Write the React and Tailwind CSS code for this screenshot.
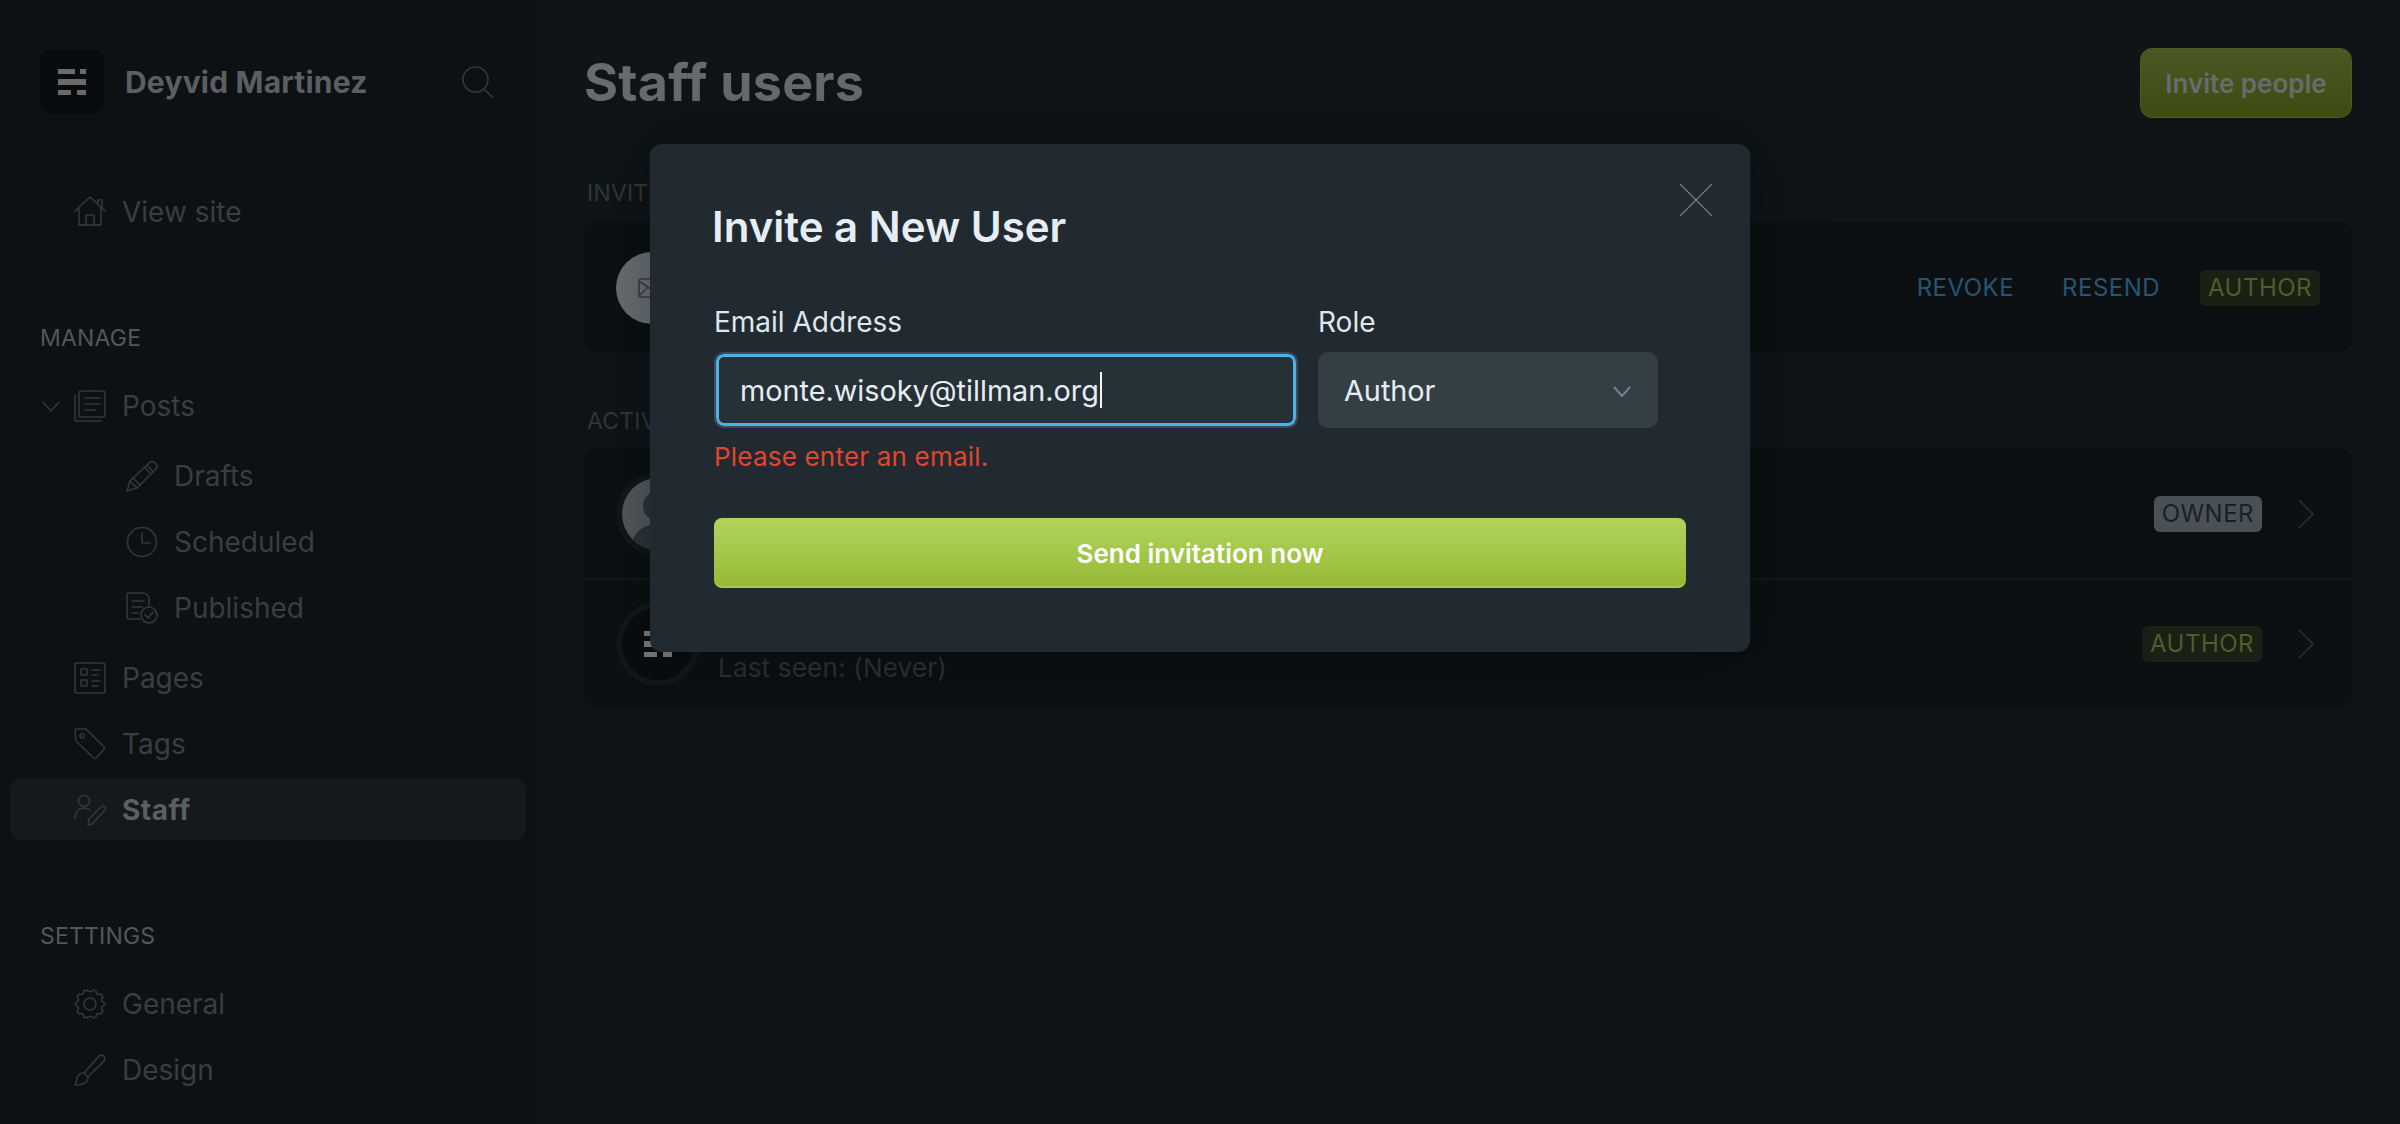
const Icon = ({ children, w = 32, h = 32, className = '' }) => (
  <svg width={w} height={h} viewBox={`0 0 ${w} ${h}`} fill="none" stroke="currentColor" strokeWidth="1.6" strokeLinecap="round" strokeLinejoin="round" className={`shrink-0 text-[#30383e] ${className}`}>
    {children}
  </svg>
)

const HomeIcon = () => (
  <Icon>
    <path d="M1 15 16 1l15 14" />
    <path d="M24 8V4h4v8" />
    <path d="M5 12v17h7V19h8v10h7V12" />
    <path d="M5 29h22" />
  </Icon>
)
const PostsIcon = () => (
  <Icon>
    <rect x="5" y="1" width="26" height="26" rx="2" />
    <path d="M1 5v24a2 2 0 0 0 2 2h24" />
    <path d="M11 8h15M11 14h15M11 20h11" />
  </Icon>
)
const PencilIcon = () => (
  <Icon>
    <path d="M1 31 4 21 23 3a4 4 0 0 1 6 0 4 4 0 0 1 1 6L11 28Z" />
    <path d="M4 21 11 28M21 5l6 7M7 18l7 7M19 8l6 6" />
  </Icon>
)
const ClockIcon = () => (
  <Icon>
    <circle cx="16" cy="16" r="14.5" />
    <path d="M16 7v10h8" />
  </Icon>
)
const PublishedIcon = () => (
  <Icon>
    <path d="M14 27H3a2 2 0 0 1-2-2V3a2 2 0 0 1 2-2h14a6 6 0 0 1 6 6v7" />
    <path d="M6 9h12M6 15h10M6 21h6" />
    <circle cx="23" cy="23" r="8" />
    <path d="m19 23 3 3 5-6" />
  </Icon>
)
const PagesIcon = () => (
  <Icon>
    <rect x="1" y="1" width="30" height="30" rx="2" />
    <rect x="7" y="7" width="6" height="6" />
    <rect x="7" y="18" width="6" height="6" />
    <path d="M18 8h8M18 13h6M18 19h8M18 24h6" />
  </Icon>
)
const TagIcon = () => (
  <Icon>
    <path d="M1 3a2 2 0 0 1 2-2h9l18 18a2 2 0 0 1 0 2.500L22 30a2 2 0 0 1-2.500 0L2 13Z" />
    <circle cx="8" cy="8" r="2" />
  </Icon>
)
const StaffIcon = () => (
  <Icon>
    <circle cx="10" cy="7" r="5.500" />
    <path d="M1 24c0-6 4-10 9-10 3 0 5 1 6 2" />
    <path d="M14 31l1-6L27 13c1-1 3-1 4 0s0 3-1 4L18 30Z" />
  </Icon>
)
const GearIcon = () => (
  <Icon>
    <circle cx="16" cy="16" r="6" />
    <path d="M13 2c1 2 5 2 6 0l3 1c0 3 2 4 5 3l2 3c-2 1-2 4 0 5 1 1 2 1 2 2s-1 1-2 2c-2 1-2 4 0 5l-2 3c-3-1-5 0-5 3l-3 1c-1-2-5-2-6 0l-3-1c0-3-2-4-5-3l-2-3c2-1 2-4 0-5-1-1-2-1-2-2s1-1 2-2c2-1 2-4 0-5l2-3c3 1 5 0 5-3Z" />
  </Icon>
)
const BrushIcon = () => (
  <Icon>
    <path d="M10 19 25 2c1-1 3-1 5 0 1 2 1 3 0 5L14 23Z" />
    <path d="M10 19c-4 0-6 2-7 5 0 3-1 5-2 7 5 0 10-1 12-4 1-2 1-3 1-4" />
  </Icon>
)
const Chevron = ({ className = '', weight = 1.5 }) => (
  <svg width="18" height="11" viewBox="0 0 18 11" fill="none" stroke="currentColor" strokeWidth={weight} className={className}>
    <path d="m1 1 8 9 8-9" />
  </svg>
)
const RowArrow = () => (
  <svg width="16" height="28" viewBox="0 0 16 28" fill="none" stroke="currentColor" strokeWidth="1.2" className="text-[#31363a]">
    <path d="m1 0 14 14L1 28" />
  </svg>
)
const LogoMark = ({ color = '#6a6a6a' }) => (
  <svg width="28" height="26" viewBox="0 0 28 26" fill={color}>
    <rect x="0" y="0" width="17" height="5" />
    <rect x="22" y="0" width="6" height="5" />
    <rect x="0" y="10" width="28" height="6" />
    <rect x="0" y="21" width="13" height="5" />
    <rect x="19" y="21" width="9" height="5" />
  </svg>
)

const NavRow = ({ icon, label, sub, active, chevron }) => (
  <div className={`flex h-[62px] w-[516px] ml-[10px] items-center rounded-xl ${sub ? 'pl-[116px]' : chevron ? 'pl-[32px]' : 'pl-[64px]'} ${active ? '-mt-[1px] mb-[1px] pt-[2px] bg-[#15191c] font-bold text-[#5a5f63]' : 'text-[#383e42]'}`}>
    {chevron && <Chevron className="mr-[14px] text-[#30383e]" />}
    {icon}
    <span className={`ml-[16px] text-[28px] ${active ? 'tracking-[0.5px]' : ''}`}>{label}</span>
  </div>
)

const SectionLabel = ({ children }) => (
  <div className="mt-[83px] mb-[25px] ml-[40px] h-[24px] text-[23px] leading-[24px] tracking-[0.2px] text-[#52575b]">{children}</div>
)

const Badge = ({ children, className }) => (
  <span className={`flex h-[36px] items-center rounded-md px-[8px] text-[24px] tracking-[0.02em] ${className}`}>{children}</span>
)

const UserLabel = ({ children, className = '' }) => (
  <div className={`h-[24px] pl-[3px] text-[23px] leading-[24px] tracking-[0.2px] text-[#31373b] ${className}`}>{children}</div>
)

export default function App() {
  return (
    <div className="relative flex h-[1124px] w-[2400px] overflow-hidden bg-[#0f1417] font-['Inter',sans-serif]">
      <aside className="h-full w-[536px] shrink-0 bg-[#0d1113] pt-[50px]">
        <div className="flex h-[64px] items-center pl-[40px]">
          <div className="flex h-[64px] w-[64px] items-center justify-center rounded-xl bg-[#080b0d]">
            <LogoMark />
          </div>
          <span className="ml-[21px] text-[30px] font-bold tracking-[0.2px] text-[#5a5f63]">Deyvid Martinez</span>
          <svg width="32" height="32" viewBox="0 0 32 32" fill="none" stroke="currentColor" strokeWidth="1.6" className="ml-[94px] text-[#30383e]">
            <circle cx="13.500" cy="13.500" r="12.500" />
            <path d="m22 23 9 9" />
          </svg>
        </div>
        <div className="mt-[67px]">
          <NavRow icon={<HomeIcon />} label="View site" />
        </div>
        <SectionLabel>MANAGE</SectionLabel>
        <NavRow icon={<PostsIcon />} label="Posts" chevron />
        <div className="mt-[8px] flex flex-col gap-[4px]">
          <NavRow icon={<PencilIcon />} label="Drafts" sub />
          <NavRow icon={<ClockIcon />} label="Scheduled" sub />
          <NavRow icon={<PublishedIcon />} label="Published" sub />
        </div>
        <div className="mt-[8px] flex flex-col gap-[4px]">
          <NavRow icon={<PagesIcon />} label="Pages" />
          <NavRow icon={<TagIcon />} label="Tags" />
          <NavRow icon={<StaffIcon />} label="Staff" active />
        </div>
        <SectionLabel>SETTINGS</SectionLabel>
        <div className="flex flex-col gap-[4px]">
          <NavRow icon={<GearIcon />} label="General" />
          <NavRow icon={<BrushIcon />} label="Design" />
        </div>
      </aside>

      <main className="flex-1 px-[48px] pt-[48px]">
        <div className="flex h-[70px] items-center justify-between">
          <h1 className="text-[52px] font-bold tracking-[0.2px] text-[#676b6f]">Staff users</h1>
          <button className="h-[70px] w-[212px] rounded-xl border border-[#4e5d1d] bg-gradient-to-b from-[#4a5724] to-[#3d4c10] text-[26px] font-semibold text-[#6a6b6c]">Invite people</button>
        </div>

        <UserLabel className="mt-[63px]">INVITED USERS</UserLabel>
        <div className="mt-[17px] flex h-[130px] items-center rounded-xl bg-[#0c1012] pl-[32px] pr-[32px] pt-[2px]">
          <div className="flex h-[72px] w-[72px] items-center justify-center rounded-full bg-[#6b6f72]">
            <svg width="28" height="20" viewBox="0 0 28 20" fill="none" stroke="currentColor" strokeWidth="1.6" className="text-[#3b3e41]">
              <rect x="1" y="1" width="26" height="18" rx="2" />
              <path d="m1 3 13 9 13-9M1 18l9-9M27 18l-9-9" />
            </svg>
          </div>
          <div className="ml-auto flex items-center">
            <span className="text-[24px] tracking-[0.02em] text-[#265574]">REVOKE</span>
            <span className="ml-[48px] text-[24px] tracking-[0.02em] text-[#265574]">RESEND</span>
            <Badge className="ml-[40px] bg-[#1a2013] text-[#4f5d2e]">AUTHOR</Badge>
          </div>
        </div>

        <UserLabel className="mt-[57px]">ACTIVE USERS</UserLabel>
        <div className="mt-[15px] rounded-xl bg-[#0c1012]">
          <div className="flex h-[130px] items-center pl-[32px] pr-[38px] pt-[2px]">
            <div className="h-[84px] w-[84px] rounded-full border-[6px] border-[#13171a]">
              <svg width="72" height="72" viewBox="0 0 72 72" className="rounded-full">
                <rect width="72" height="72" fill="#55595c" />
                <circle cx="36" cy="28" r="15" fill="#2f3336" />
                <path d="M8 72c2-18 14-26 28-26s26 8 28 26Z" fill="#2f3336" />
              </svg>
            </div>
            <Badge className="ml-auto bg-[#4a5156] text-[#1b1f23]">OWNER</Badge>
            <span className="ml-[36px]"><RowArrow /></span>
          </div>
          <div className="flex h-[130px] items-center border-t-2 border-[#14181b] pl-[32px] pr-[38px]">
            <div className="flex h-[84px] w-[84px] items-center justify-center rounded-full border-[6px] border-[#13171a] bg-[#0a0d0f]">
              <LogoMark color="#77797b" />
            </div>
            <span className="ml-[18px] mt-[46px] text-[26px] tracking-[0.2px] text-[#2b3135]">Last seen: (Never)</span>
            <Badge className="ml-auto bg-[#1a2013] text-[#4f5d2e]">AUTHOR</Badge>
            <span className="ml-[36px]"><RowArrow /></span>
          </div>
        </div>
      </main>

      <div className="absolute left-[650px] top-[144px] h-[508px] w-[1100px] rounded-xl bg-[#222a31] pl-[64px] pt-[58px] shadow-[0_0_80px_rgba(0,0,0,0.3)]">
        <svg width="32" height="32" viewBox="0 0 32 32" fill="none" stroke="currentColor" strokeWidth="1.2" className="absolute right-[38px] top-[40px] text-[#80868a]">
          <path d="m0 0 32 32M32 0 0 32" />
        </svg>
        <h2 className="-ml-[2px] h-[50px] text-[42px] font-semibold leading-[50px] text-[#e6edf4]">Invite a New User</h2>
        <div className="mt-[53px] flex gap-[20px]">
          <div className="w-[584px]">
            <label className="block h-[34px] text-[28px] leading-[34px] text-[#dfe6ec]">Email Address</label>
            <div className="mt-[13px] flex h-[76px] items-center rounded-[10px] border-2 border-[#3f4c56] bg-[#263037] pl-[24px] pt-[2px] text-[28.8px] text-[#e6edf2] shadow-[inset_0_0_0_3px_#4cb1e8]">
              monte.wisoky@tillman.org
              <span className="mb-[2px] ml-[1px] h-[36px] w-[2px] bg-[#f2f5f7]" />
            </div>
            <p className="mt-[14px] h-[30px] text-[26px] leading-[30px] tracking-[0.2px] text-[#e0462e]">Please enter an email.</p>
          </div>
          <div className="w-[340px]">
            <label className="block h-[34px] text-[28px] leading-[34px] text-[#dfe6ec]">Role</label>
            <div className="mt-[13px] flex h-[76px] items-center justify-between rounded-[10px] bg-[#343f45] pl-[26px] pr-[27px] pt-[2px] text-[28.8px] text-[#e6edf2]">
              Author
              <Chevron className="text-[#6e828f]" weight={2} />
            </div>
          </div>
        </div>
        <button className="mt-[46px] h-[70px] w-[972px] rounded-lg border-b-2 border-[#a9cc44] bg-gradient-to-b from-[#b1d55c] to-[#96ba34] pt-[2px] text-[26px] font-semibold text-white">Send invitation now</button>
      </div>
    </div>
  )
}
